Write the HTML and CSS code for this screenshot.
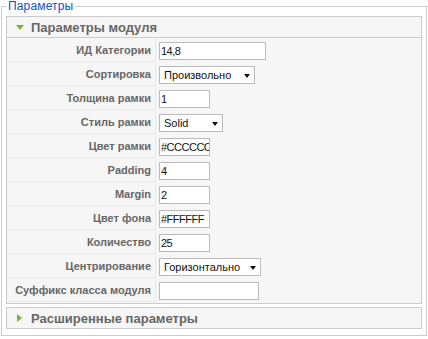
FILE: index.html
```html
<!DOCTYPE html>
<html lang="ru">
<head>
<meta charset="utf-8">
<title>Параметры</title>
<link rel="stylesheet" href="styles.css">
</head>
<body>
<fieldset class="params">
  <legend class="params-legend">Параметры</legend>
  <div class="pane">
    <div class="panel">
      <h3 class="panel-title open"><span class="arrow arrow-down"></span>Параметры модуля</h3>
      <div class="panel-content">
        <table class="paramlist">
          <tr><td class="key">ИД Категории</td><td class="val"><input class="txt w107" type="text" value="14,8"></td></tr>
          <tr><td class="key">Сортировка</td><td class="val"><span class="sel w96"><select><option>Произвольно</option></select></span></td></tr>
          <tr><td class="key">Толщина рамки</td><td class="val"><input class="txt w51" type="text" value="1"></td></tr>
          <tr><td class="key">Стиль рамки</td><td class="val"><span class="sel w64"><select><option>Solid</option></select></span></td></tr>
          <tr><td class="key">Цвет рамки</td><td class="val"><input class="txt w51" type="text" value="#CCCCCC"></td></tr>
          <tr><td class="key">Padding</td><td class="val"><input class="txt w51" type="text" value="4"></td></tr>
          <tr><td class="key">Margin</td><td class="val"><input class="txt w51" type="text" value="2"></td></tr>
          <tr><td class="key">Цвет фона</td><td class="val"><input class="txt w51" type="text" value="#FFFFFF"></td></tr>
          <tr><td class="key">Количество</td><td class="val"><input class="txt w51" type="text" value="25"></td></tr>
          <tr><td class="key">Центрирование</td><td class="val"><span class="sel w102"><select><option>Горизонтально</option></select></span></td></tr>
          <tr><td class="key">Суффикс класса модуля</td><td class="val"><input class="txt w100" type="text" value=""></td></tr>
        </table>
      </div>
    </div>
    <div class="panel">
      <h3 class="panel-title"><span class="arrow arrow-right"></span>Расширенные параметры</h3>
    </div>
  </div>
</fieldset>
</body>
</html>
```

FILE: styles.css
```css
html, body {
  margin: 0;
  padding: 0;
  background: #fff;
  font-family: "Liberation Sans", Arial, sans-serif;
  font-size: 11px;
  color: #333;
}

.params {
  margin: 0 1px;
  padding: 0 4px 3px 4px;
  border: 1px solid #ccc;
  min-width: 0;
}

.params-legend {
  color: #0b55c4;
  font-size: 12px;
  line-height: 13px;
  padding: 0 2px;
  letter-spacing: 0.15px;
}

.pane {
  margin-top: 3px;
}

.panel {
  border: 1px solid #ccc;
  margin-bottom: 3px;
  background: #f6f6f6;
}

.panel-title {
  margin: 0;
  height: 20px;
  display: flex;
  align-items: center;
  font-size: 13px;
  font-weight: bold;
  color: #666;
  padding-left: 8px;
}

.panel-title.open {
  border-bottom: 1px solid #ccc;
}

.arrow {
  display: inline-block;
  width: 0;
  height: 0;
}

.arrow-down {
  border-left: 4px solid transparent;
  border-right: 4px solid transparent;
  border-top: 5px solid #72b83e;
  margin-left: 1px;
  margin-right: 7px;
}

.arrow-right {
  border-top: 4px solid transparent;
  border-bottom: 4px solid transparent;
  border-left: 5px solid #72b83e;
  margin-left: 2px;
  margin-right: 9px;
}

.panel-content {
  background: #f6f6f6;
}

.paramlist {
  width: 100%;
  border-collapse: separate;
  border-spacing: 1px;
}

.paramlist td {
  height: 22px;
  padding: 0;
  vertical-align: middle;
}

.paramlist .key {
  width: 143px;
  padding-right: 4px;
  text-align: right;
  font-weight: bold;
  color: #666;
  background: #f6f6f6;
  border-bottom: 1px solid #e9e9e9;
  border-right: 1px solid #e9e9e9;
  white-space: nowrap;
}

.paramlist .val {
  padding-left: 2px;
}

.txt {
  box-sizing: border-box;
  height: 18px;
  margin: 0;
  padding: 0 0 0 1px;
  border: 1px solid #bbb;
  background: #fff;
  font-family: "Liberation Sans", Arial, sans-serif;
  font-size: 11px;
  letter-spacing: -0.5px;
  color: #111;
  display: block;
  outline: none;
}

.sel {
  position: relative;
  display: block;
  height: 18px;
}

.sel select {
  appearance: none;
  -webkit-appearance: none;
  box-sizing: border-box;
  width: 100%;
  height: 18px;
  margin: 0;
  padding: 0 0 0 4px;
  border: 1px solid #bbb;
  border-radius: 0;
  background: #fff;
  font-family: "Liberation Sans", Arial, sans-serif;
  font-size: 11px;
  color: #111;
  display: block;
}

.sel::after {
  content: "";
  position: absolute;
  right: 5px;
  top: 8px;
  border-left: 3.5px solid transparent;
  border-right: 3.5px solid transparent;
  border-top: 4px solid #111;
}

.w107 { width: 107px; }
.w51 { width: 51px; }
.w100 { width: 100px; }
.w96 { width: 96px; }
.w64 { width: 64px; }
.w102 { width: 102px; }
```
